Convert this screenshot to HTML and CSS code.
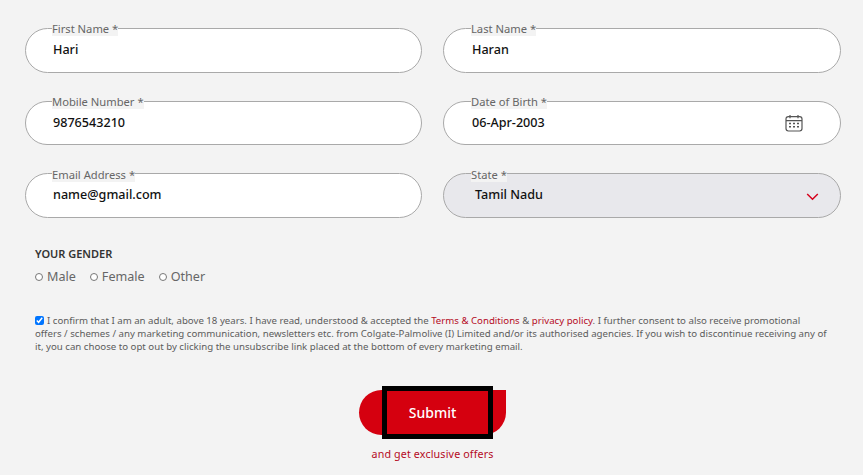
FILE: index.html
```html
<!DOCTYPE html>
<html lang="en">
<head>
<meta charset="utf-8">
<title>Sign up</title>
<link rel="stylesheet" href="styles.css">
</head>
<body>
<form class="form">
  <div class="fields">
    <div class="field"><span class="label">First Name *</span><span class="value">Hari</span></div>
    <div class="field"><span class="label">Last Name *</span><span class="value">Haran</span></div>
    <div class="field"><span class="label">Mobile Number *</span><span class="value">9876543210</span></div>
    <div class="field"><span class="label">Date of Birth *</span><span class="value">06-Apr-2003</span>
      <svg class="cal" width="18" height="18" viewBox="0 0 18 18" fill="none" stroke="#555" stroke-width="1.2">
        <rect x="1" y="2.6" width="16" height="14.4" rx="2.4"/>
        <path d="M1 6.6h16M5 1v3.2M13 1v3.2"/>
        <path d="M4 9.5h2M8 9.5h2M12 9.5h2M4 12.8h2M8 12.8h2M12 12.8h2" stroke-width="1.5"/>
      </svg>
    </div>
    <div class="field"><span class="label">Email Address *</span><span class="value">name@gmail.com</span></div>
    <div class="field field-select"><span class="label">State *</span><span class="value value-select">Tamil Nadu</span>
      <svg class="chev" width="13" height="8" viewBox="0 0 13 8" fill="none" stroke="#d5001c" stroke-width="1.5">
        <path d="M1.2 1l5.3 5.3L11.8 1"/>
      </svg>
    </div>
  </div>

  <div class="gender">
    <div class="gender-title">YOUR GENDER</div>
    <div class="gender-options">
      <span class="option"><i class="radio"></i>Male</span>
      <span class="option"><i class="radio"></i>Female</span>
      <span class="option"><i class="radio"></i>Other</span>
    </div>
  </div>

  <p class="consent"><input class="check" type="checkbox" checked>I confirm that I am an adult, above 18 years. I have read, understood &amp; accepted the <a>Terms &amp; Conditions</a> &amp; <a>privacy policy</a>. I further consent to also receive promotional offers / schemes / any marketing communication, newsletters etc. from Colgate-Palmolive (I) Limited and/or its authorised agencies. If you wish to discontinue receiving any of it, you can choose to opt out by clicking the unsubscribe link placed at the bottom of every marketing email.</p>

  <div class="actions">
    <div class="submit"><span class="focus-ring"></span><span class="submit-text">Submit</span></div>
    <div class="offers">and get exclusive offers</div>
  </div>
</form>
</body>
</html>
```
FILE: styles.css
```css
* { box-sizing: border-box; }
html, body { margin: 0; height: 475px; overflow: hidden; }
body {
  background: #f3f3f3;
  font-family: "Noto Sans", "Open Sans", sans-serif;
  color: #111;
}
.form { padding: 28px 22px 0 25px; }
.fields {
  display: grid;
  grid-template-columns: 397px 398px;
  column-gap: 21px;
  row-gap: 28px;
}
.field {
  position: relative;
  height: 45px;
  border: 1px solid #a9a9a9;
  border-radius: 23px;
  background: #fff;
  display: flex;
  align-items: center;
  justify-content: space-between;
  padding: 0 37px 0 27px;
}
.field:nth-child(even) { padding-left: 28px; }
.field:nth-child(n+3):nth-child(-n+4) { height: 44px; }
.field:nth-child(n+3):nth-child(-n+4) .value { margin-top: 0; }
.field:nth-child(even) .label { left: 27px; }
.field:nth-child(n+5) .label { top: -6px; }
.field.field-select { background: #e8e8ec; padding-left: 31px; padding-right: 21px; }
.label {
  position: absolute;
  left: 26px;
  top: -7px;
  font-size: 11.2px;
  line-height: 14px;
  color: #666;
  background: #f3f3f3;
}
.value { font-size: 12.6px; font-weight: 500; line-height: 18px; margin-top: -2px; }
.cal { margin-top: -1px; }
.chev { margin-top: 3px; }
.gender { padding: 28px 0 0 10px; }
.gender-title { font-size: 11px; font-weight: 600; line-height: 15px; color: #333; }
.gender-options { display: flex; gap: 14px; margin-top: 7px; }
.option { display: flex; align-items: center; font-size: 12.6px; line-height: 18px; color: #666; }
.radio {
  width: 8px;
  height: 8px;
  margin-right: 4px;
  border: 1px solid #777;
  border-radius: 50%;
  background: #fff;
}
.consent {
  margin: 28px 0 0;
  padding-left: 10px;
  width: 804px;
  font-size: 9.66px;
  line-height: 13px;
  color: #5c5c5c;
}
.consent a { color: #b50a1e; }
.check {
  width: 9px;
  height: 9px;
  margin: 0 3px 0 0;
  vertical-align: -1px;
}
.actions { display: flex; flex-direction: column; align-items: center; margin-top: 37px; padding-right: 1px; }
.submit {
  position: relative;
  width: 147px;
  height: 45px;
  border-radius: 24px 0 24px 24px;
  background: #d5000f;
  display: flex;
  align-items: center;
  justify-content: center;
}
.focus-ring {
  position: absolute;
  left: 23px;
  top: -4px;
  width: 111px;
  height: 53px;
  border: 5px solid #000;
}
.submit-text { position: relative; color: #fff; font-size: 14px; font-weight: 500; }
.offers { margin-top: 12px; font-size: 10.7px; line-height: 15px; color: #b50a1e; letter-spacing: .15px; }
```
